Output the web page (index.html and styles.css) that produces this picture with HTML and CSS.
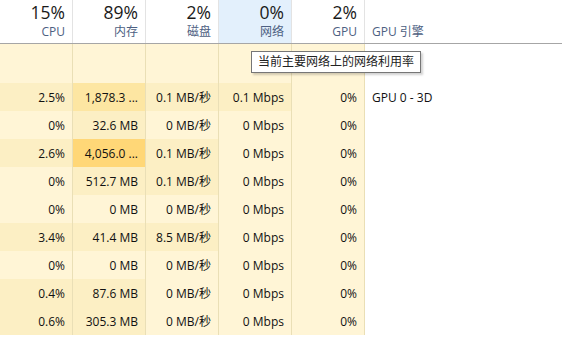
FILE: index.html
```html
<!DOCTYPE html>
<html lang="zh-CN">
<head>
<meta charset="utf-8">
<title>任务管理器</title>
<link rel="stylesheet" href="styles.css">
</head>
<body>
<div class="table">
  <div class="head">
    <div class="hc"><span class="pct">15%</span><span class="lbl">CPU</span></div>
    <div class="hc"><span class="pct">89%</span><span class="lbl">内存</span></div>
    <div class="hc"><span class="pct">2%</span><span class="lbl">磁盘</span></div>
    <div class="hc sel"><span class="pct">0%</span><span class="lbl">网络</span></div>
    <div class="hc"><span class="pct">2%</span><span class="lbl">GPU</span></div>
    <div class="hc left"><span class="pct"></span><span class="lbl">GPU 引擎</span></div>
  </div>
  <div class="row group">
    <div class="c h0"></div><div class="c h0"></div><div class="c h0"></div><div class="c h0"></div><div class="c h0"></div><div class="c last"></div>
  </div>
  <div class="row">
    <div class="c h1">2.5%</div><div class="c h3">1,878.3 ...</div><div class="c h1">0.1 MB/秒</div><div class="c h1">0.1 Mbps</div><div class="c h0">0%</div><div class="c last">GPU 0 - 3D</div>
  </div>
  <div class="row">
    <div class="c h0">0%</div><div class="c h1">32.6 MB</div><div class="c h0">0 MB/秒</div><div class="c h0">0 Mbps</div><div class="c h0">0%</div><div class="c last"></div>
  </div>
  <div class="row">
    <div class="c h1">2.6%</div><div class="c h4">4,056.0 ...</div><div class="c h1">0.1 MB/秒</div><div class="c h0">0 Mbps</div><div class="c h0">0%</div><div class="c last"></div>
  </div>
  <div class="row">
    <div class="c h0">0%</div><div class="c h1">512.7 MB</div><div class="c h1">0.1 MB/秒</div><div class="c h0">0 Mbps</div><div class="c h0">0%</div><div class="c last"></div>
  </div>
  <div class="row">
    <div class="c h0">0%</div><div class="c h0">0 MB</div><div class="c h0">0 MB/秒</div><div class="c h0">0 Mbps</div><div class="c h0">0%</div><div class="c last"></div>
  </div>
  <div class="row">
    <div class="c h1">3.4%</div><div class="c h1">41.4 MB</div><div class="c h1">8.5 MB/秒</div><div class="c h0">0 Mbps</div><div class="c h0">0%</div><div class="c last"></div>
  </div>
  <div class="row">
    <div class="c h0">0%</div><div class="c h0">0 MB</div><div class="c h0">0 MB/秒</div><div class="c h0">0 Mbps</div><div class="c h0">0%</div><div class="c last"></div>
  </div>
  <div class="row">
    <div class="c h1">0.4%</div><div class="c h1">87.6 MB</div><div class="c h0">0 MB/秒</div><div class="c h0">0 Mbps</div><div class="c h0">0%</div><div class="c last"></div>
  </div>
  <div class="row">
    <div class="c h1">0.6%</div><div class="c h1">305.3 MB</div><div class="c h0">0 MB/秒</div><div class="c h0">0 Mbps</div><div class="c h0">0%</div><div class="c last"></div>
  </div>
</div>
<div class="tooltip">当前主要网络上的网络利用率</div>
</body>
</html>
```
FILE: styles.css
```css
html, body {
  margin: 0;
  padding: 0;
  background: #ffffff;
  font-family: "Open Sans", "Noto Sans CJK SC", sans-serif;
  color: #000;
  overflow: hidden;
}
.table {
  width: 562px;
}
.head, .row {
  display: grid;
  grid-template-columns: 73px 73px 73px 73px 73px 1fr;
}
.head {
  height: 43px;
  border-bottom: 1px solid #a6a6a6;
}
.hc {
  display: flex;
  flex-direction: column;
  align-items: flex-end;
  padding-right: 7px;
  border-right: 1px solid #e3e3e3;
}
.hc.left {
  align-items: flex-start;
  padding-left: 7px;
  border-right: none;
}
.hc.sel {
  background: #e3f0fc;
}
.pct {
  font-size: 17.5px;
  line-height: 20px;
  height: 20px;
  margin-top: 2px;
  color: #1a1a1a;
}
.lbl {
  font-size: 12px;
  line-height: 16px;
  margin-top: 2px;
  color: #4d6082;
}
.row {
  height: 28px;
}
.row.group {
  height: 39px;
}
.c {
  font-size: 12px;
  display: flex;
  align-items: center;
  justify-content: flex-end;
  padding-right: 7px;
  border-right: 1px solid #eadfb6;
  white-space: nowrap;
  color: #111;
}
.c.last {
  justify-content: flex-start;
  padding-left: 7px;
  border-right: none;
  background: #fff;
}
.h0 { background: #fff5d6; }
.h1 { background: #fcefc4; }
.h3 { background: #fde6a2; }
.h4 { background: #ffd777; }
.tooltip {
  position: absolute;
  left: 251px;
  top: 51px;
  height: 20px;
  padding: 0 6px;
  background: #fff;
  border: 1px solid #767676;
  box-shadow: 2px 2px 2px rgba(0,0,0,0.18);
  font-size: 12px;
  line-height: 20px;
  color: #222;
  white-space: nowrap;
}
```
